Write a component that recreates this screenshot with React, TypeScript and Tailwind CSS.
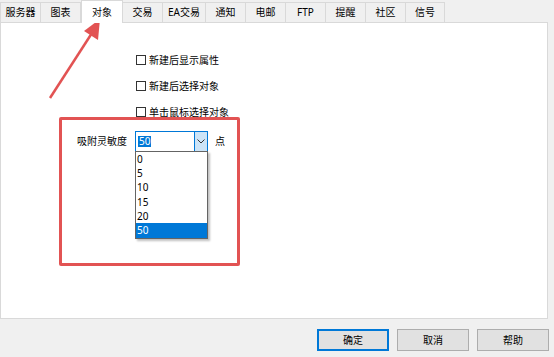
const tabs = [
  { label: '服务器', w: 40 },
  { label: '图表', w: 40 },
  { label: '对象', w: 42, active: true },
  { label: '交易', w: 40 },
  { label: 'EA交易', w: 43 },
  { label: '通知', w: 40 },
  { label: '电邮', w: 40 },
  { label: 'FTP', w: 40 },
  { label: '提醒', w: 40 },
  { label: '社区', w: 40 },
  { label: '信号', w: 39 },
];

const checks = ['新建后显示属性', '新建后选择对象', '单击鼠标选择对象'];
const options = ['0', '5', '10', '15', '20', '50'];

export default function App() {
  return (
    <div
      className="relative h-[357px] w-[554px] overflow-hidden bg-[#f0f0f0] text-[10px] text-black"
      style={{ fontFamily: '"Noto Sans", "Noto Sans CJK SC", sans-serif' }}
    >
      {/* tab strip */}
      <div className="flex h-[22px] items-end">
        {tabs.map((tab) =>
          tab.active ? (
            <div
              key={tab.label}
              className="relative z-10 -mb-px flex h-[23px] items-center justify-center border border-b-0 border-[#d9d9d9] bg-white"
              style={{ width: tab.w }}
            >
              {tab.label}
            </div>
          ) : (
            <div
              key={tab.label}
              className="-ml-px flex h-[20px] items-center justify-center border border-b-0 border-[#d9d9d9] bg-[#f0f0f0] first:ml-0"
              style={{ width: tab.w + 1 }}
            >
              {tab.label}
            </div>
          ),
        )}
      </div>

      {/* page */}
      <div className="h-[297px] w-[548px] border border-[#d9d9d9] bg-white pt-[24px]">
        {checks.map((c) => (
          <div key={c} className="flex h-[26px] items-center gap-[3px] pl-[135px]">
            <span className="h-[10px] w-[10px] border border-[#333]" />
            <span>{c}</span>
          </div>
        ))}

        <div className="mt-[6px] flex h-[21px] items-center pl-[76px]">
          <span className="w-[51px]">吸附灵敏度</span>
          <div className="ml-[7px] flex h-[21px] w-[73px] items-center border border-[#0078d7]">
            <div className="flex flex-1 items-center pl-[2px]">
              <span className="bg-[#0078d7] px-px leading-[11px] text-white">50</span>
            </div>
            <div className="flex h-full w-[13px] items-center justify-center border-l border-[#0078d7] bg-[#cce4f7]">
              <svg width="8" height="5" viewBox="0 0 8 5" fill="none">
                <path d="M0.5 0.5 L4 4 L7.5 0.5" stroke="#333" strokeWidth="1" />
              </svg>
            </div>
          </div>
          <span className="ml-[7px]">点</span>
        </div>
      </div>

      {/* dropdown list */}
      <div className="absolute left-[135px] top-[151px] w-[73px] border border-[#646464] bg-white shadow-[2px_2px_2px_rgba(0,0,0,0.25)]">
        {options.map((o) => (
          <div
            key={o}
            className={`flex h-[14.3px] items-center pl-[1px] ${o === '50' ? 'bg-[#0078d7] text-white' : ''}`}
          >
            {o}
          </div>
        ))}
      </div>

      {/* buttons */}
      <div className="flex justify-end gap-[8px] pr-[5px] pt-[10px]">
        <button className="h-[22px] w-[72px] border-2 border-[#0078d7] bg-[#e1e1e1]">确定</button>
        <button className="h-[22px] w-[72px] border border-[#adadad] bg-[#e1e1e1]">取消</button>
        <button className="h-[22px] w-[72px] border border-[#adadad] bg-[#e1e1e1]">帮助</button>
      </div>

      {/* annotations */}
      <div className="pointer-events-none absolute left-[59px] top-[117px] h-[149px] w-[181px] rounded-[2px] border-[3px] border-[#e25353]" />
      <svg className="pointer-events-none absolute left-0 top-0" width="554" height="357">
        <line x1="50" y1="98" x2="92" y2="33" stroke="#e25353" strokeWidth="2.5" />
        <polygon points="100,19 98,40 84,31" fill="#e25353" />
      </svg>
    </div>
  );
}
